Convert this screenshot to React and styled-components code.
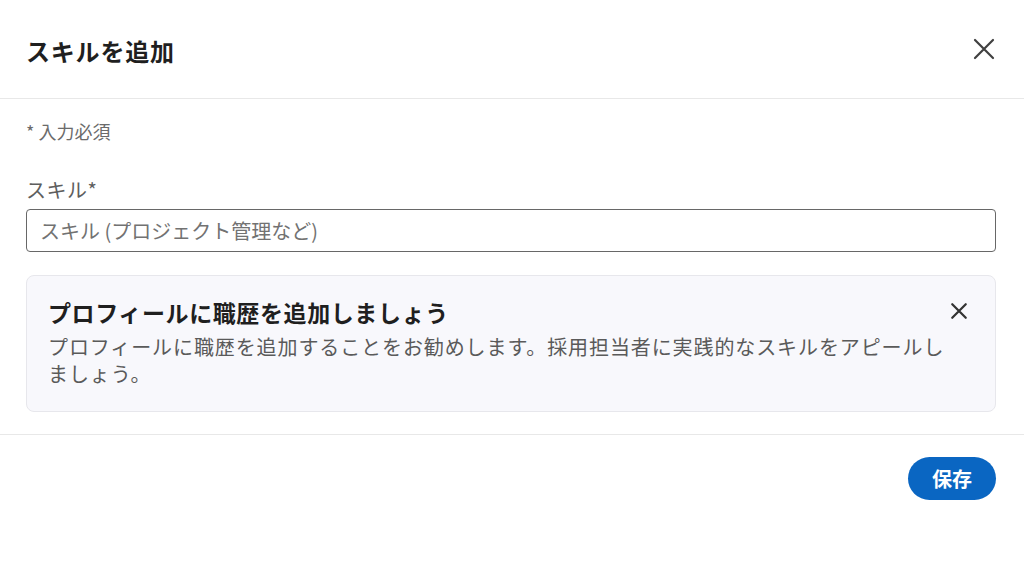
import React from "react";
import styled, { createGlobalStyle } from "styled-components";

const Global = createGlobalStyle`
  html, body { margin: 0; padding: 0; background: #fff; }
  body { font-family: "Noto Sans CJK JP", "Noto Sans", sans-serif; color: #191919; }
  * { box-sizing: border-box; }
`;

const Dialog = styled.div`
  width: 1024px;
  min-height: 576px;
  background: #fff;
  display: flex;
  flex-direction: column;
`;

const Header = styled.header`
  height: 99px;
  display: flex;
  align-items: center;
  justify-content: space-between;
  padding: 0 26px 0 26px;
  border-bottom: 1px solid #e8e8e8;
`;

const Title = styled.h2`
  margin: 0;
  font-size: 24px;
  font-weight: 700;
  letter-spacing: 0.8px;
  color: #1f1f1f;
  line-height: 32px;
  padding-top: 4px;
`;

const IconButton = styled.button`
  border: none;
  background: transparent;
  padding: 0;
  width: ${(p) => p.$size}px;
  height: ${(p) => p.$size}px;
  display: flex;
  align-items: center;
  justify-content: center;
  color: ${(p) => p.$color};
  cursor: pointer;
`;

const DismissButton = styled(IconButton)`
  position: absolute;
  top: 22px;
  right: 23px;
`;

const Body = styled.section`
  padding: 21px 28px 22px 26px;
  display: flex;
  flex-direction: column;
  border-bottom: 1px solid #e8e8e8;
`;

const Required = styled.p`
  margin: 0;
  font-size: 18px;
  line-height: 22px;
  color: #6b6b6b;
`;

const Label = styled.label`
  margin-top: 35px;
  font-size: 20px;
  line-height: 26px;
  letter-spacing: 0.5px;
  color: #5e5e5e;
`;

const Input = styled.input`
  margin-top: 6px;
  height: 43px;
  width: 100%;
  border: 1px solid #676767;
  border-radius: 4px;
  padding: 0 13px;
  font-family: inherit;
  font-size: 20px;
  color: #191919;
  outline: none;
  &::placeholder { color: #727272; }
`;

const Notice = styled.div`
  position: relative;
  margin-top: 23px;
  background: #f8f8fc;
  border: 1px solid #e7e7ec;
  border-radius: 8px;
  padding: 21px 26px 24px 21px;
  display: flex;
  flex-direction: column;
`;

const NoticeTitle = styled.h3`
  margin: 0;
  font-size: 23px;
  line-height: 30px;
  font-weight: 700;
  color: #1f1f1f;
  letter-spacing: 0.6px;
`;

const NoticeBody = styled.p`
  margin: 6px 0 0;
  font-size: 20px;
  line-height: 27px;
  color: #5a5a5a;
  letter-spacing: 0.9px;
  max-width: 906px;
`;

const Footer = styled.footer`
  padding: 22px 28px;
  display: flex;
  justify-content: flex-end;
`;

const PrimaryButton = styled.button`
  height: 43px;
  padding: 0 24px;
  border: none;
  border-radius: 22px;
  background: #0a66c2;
  color: #fff;
  font-family: inherit;
  font-size: 20px;
  font-weight: 700;
  cursor: pointer;
`;

const Cross = ({ size, stroke }) => (
  <svg width={size} height={size} viewBox="0 0 24 24" fill="none">
    <path d="M3 3 L21 21 M21 3 L3 21" stroke="currentColor" strokeWidth={stroke} strokeLinecap="round" />
  </svg>
);

export default function App() {
  return (
    <>
      <Global />
      <Dialog>
        <Header>
          <Title>スキルを追加</Title>
          <IconButton $size={28} $color="#404040" aria-label="閉じる">
            <Cross size={24} stroke={2.2} />
          </IconButton>
        </Header>
        <Body>
          <Required>* 入力必須</Required>
          <Label htmlFor="skill">スキル*</Label>
          <Input id="skill" placeholder="スキル (プロジェクト管理など)" />
          <Notice>
            <NoticeTitle>プロフィールに職歴を追加しましょう</NoticeTitle>
            <NoticeBody>
              プロフィールに職歴を追加することをお勧めします。採用担当者に実践的なスキルをアピールしましょう。
            </NoticeBody>
            <DismissButton $size={26} $color="#333" aria-label="閉じる">
              <Cross size={18} stroke={3} />
            </DismissButton>
          </Notice>
        </Body>
        <Footer>
          <PrimaryButton>保存</PrimaryButton>
        </Footer>
      </Dialog>
    </>
  );
}
